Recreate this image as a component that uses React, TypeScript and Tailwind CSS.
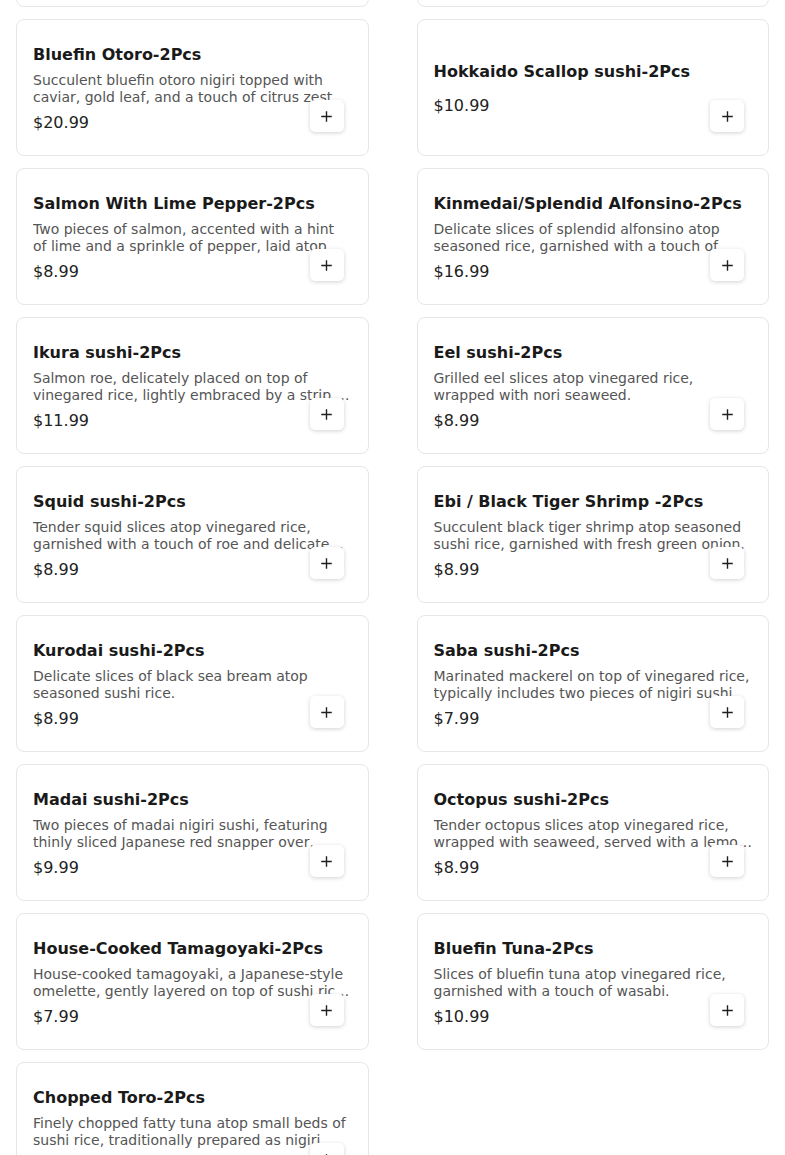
import React from 'react';

interface MenuItem {
  name: string;
  description?: string;
  price: string;
}

const items: MenuItem[] = [
  { name: 'Chutoro-2Pcs', description: 'Medium fatty tuna nigiri atop seasoned rice.', price: '$14.99' },
  { name: 'Akami-2Pcs', description: 'Lean bluefin tuna nigiri atop seasoned rice.', price: '$9.99' },
  {
    name: 'Bluefin Otoro-2Pcs',
    description: 'Succulent bluefin otoro nigiri topped with caviar, gold leaf, and a touch of citrus zest.',
    price: '$20.99',
  },
  { name: 'Hokkaido Scallop sushi-2Pcs', price: '$10.99' },
  {
    name: 'Salmon With Lime Pepper-2Pcs',
    description: 'Two pieces of salmon, accented with a hint of lime and a sprinkle of pepper, laid atop seasoned rice.',
    price: '$8.99',
  },
  {
    name: 'Kinmedai/Splendid Alfonsino-2Pcs',
    description: 'Delicate slices of splendid alfonsino atop seasoned rice, garnished with a touch of wasabi.',
    price: '$16.99',
  },
  {
    name: 'Ikura sushi-2Pcs',
    description: 'Salmon roe, delicately placed on top of vinegared rice, lightly embraced by a strip of nori.',
    price: '$11.99',
  },
  {
    name: 'Eel sushi-2Pcs',
    description: 'Grilled eel slices atop vinegared rice, wrapped with nori seaweed.',
    price: '$8.99',
  },
  {
    name: 'Squid sushi-2Pcs',
    description: 'Tender squid slices atop vinegared rice, garnished with a touch of roe and delicate shiso.',
    price: '$8.99',
  },
  {
    name: 'Ebi / Black Tiger Shrimp -2Pcs',
    description: 'Succulent black tiger shrimp atop seasoned sushi rice, garnished with fresh green onion.',
    price: '$8.99',
  },
  {
    name: 'Kurodai sushi-2Pcs',
    description: 'Delicate slices of black sea bream atop seasoned sushi rice.',
    price: '$8.99',
  },
  {
    name: 'Saba sushi-2Pcs',
    description: 'Marinated mackerel on top of vinegared rice, typically includes two pieces of nigiri sushi.',
    price: '$7.99',
  },
  {
    name: 'Madai sushi-2Pcs',
    description: 'Two pieces of madai nigiri sushi, featuring thinly sliced Japanese red snapper over seasoned rice.',
    price: '$9.99',
  },
  {
    name: 'Octopus sushi-2Pcs',
    description: 'Tender octopus slices atop vinegared rice, wrapped with seaweed, served with a lemon slice.',
    price: '$8.99',
  },
  {
    name: 'House-Cooked Tamagoyaki-2Pcs',
    description: 'House-cooked tamagoyaki, a Japanese-style omelette, gently layered on top of sushi rice with nori.',
    price: '$7.99',
  },
  {
    name: 'Bluefin Tuna-2Pcs',
    description: 'Slices of bluefin tuna atop vinegared rice, garnished with a touch of wasabi.',
    price: '$10.99',
  },
  {
    name: 'Chopped Toro-2Pcs',
    description: 'Finely chopped fatty tuna atop small beds of sushi rice, traditionally prepared as nigiri.',
    price: '$13.99',
  },
];

function PlusIcon() {
  return (
    <svg width="11" height="11" viewBox="0 0 12 12" fill="none" stroke="#1f1f1f" strokeWidth="1.5" strokeLinecap="square">
      <path d="M6 1v10M1 6h10" />
    </svg>
  );
}

function ItemCard({ item }: { item: MenuItem }) {
  return (
    <div className="relative h-[137px] rounded-lg border border-[#e6e6e6] bg-white px-4 pt-[3px] flex flex-col justify-center">
      <h3 className="text-base font-bold leading-6 text-[#1a1a1a] mb-[5px]">{item.name}</h3>
      {item.description && (
        <p className="text-sm leading-[17px] text-[#555555] line-clamp-2">{item.description}</p>
      )}
      <p className="text-base leading-6 text-[#222222] mt-[5px]">{item.price}</p>
      {/* add button sits over the text */}
      <button className="absolute right-6 bottom-[23px] w-[34px] h-[32px] rounded-[5px] bg-white shadow-[0_1px_4px_rgba(0,0,0,0.18)] flex items-center justify-center">
        <PlusIcon />
      </button>
    </div>
  );
}

export default function App() {
  return (
    <div className="h-[1155px] overflow-hidden bg-white font-['DejaVu_Sans',sans-serif]">
      <div className="px-4 -mt-[130px] grid grid-cols-2 gap-x-12 gap-y-3">
        {items.map((item) => (
          <ItemCard key={item.name} item={item} />
        ))}
      </div>
    </div>
  );
}
